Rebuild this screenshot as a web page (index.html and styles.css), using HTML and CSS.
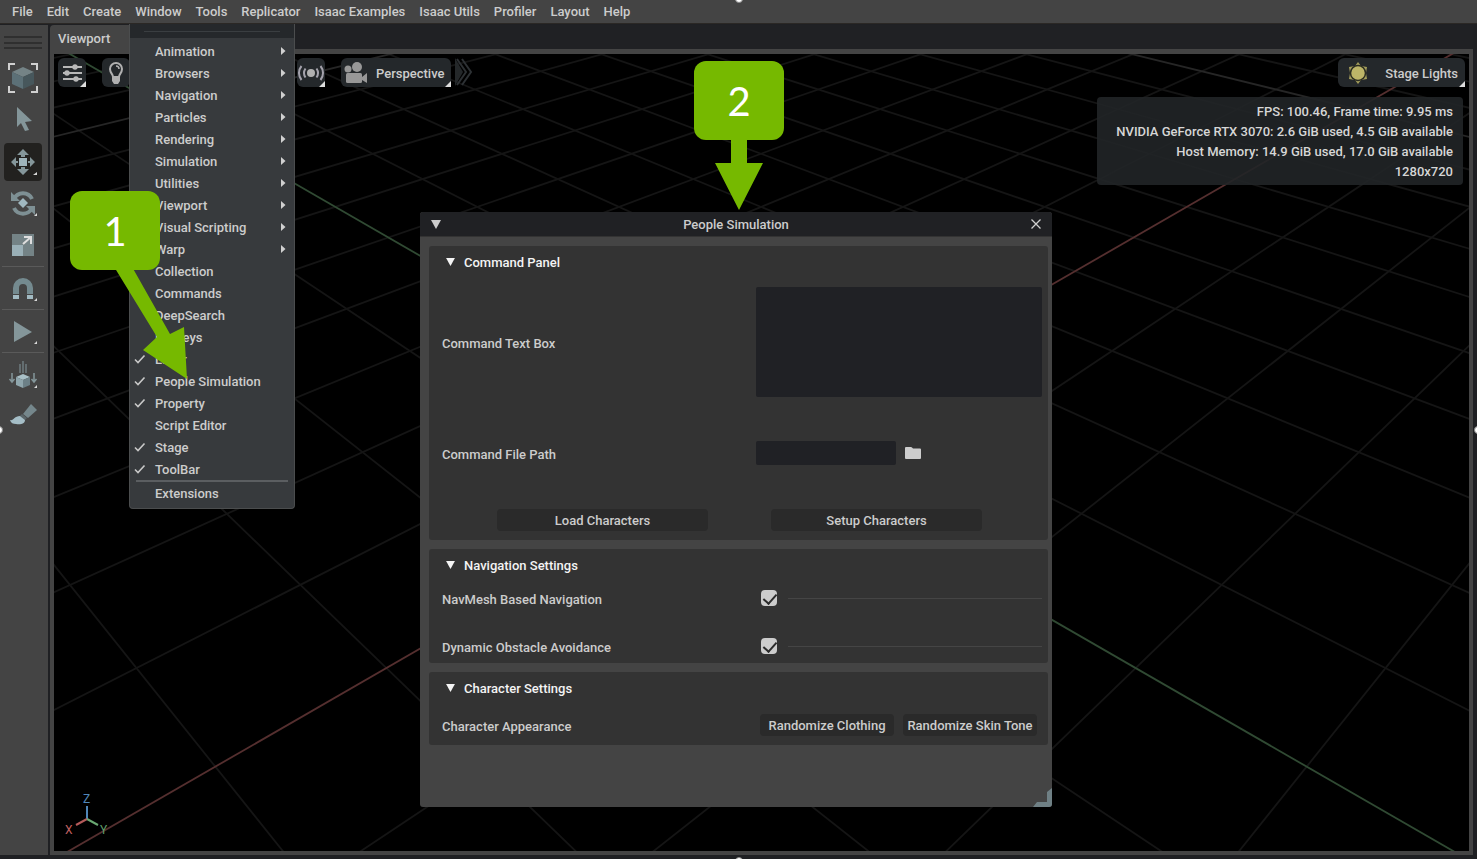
FILE: index.html
```
<!DOCTYPE html>
<html lang="en">
<head>
    <meta charset="utf-8">
    <title>People Simulation</title>
    <link rel="stylesheet" href="styles.css">
</head>
<body>
    <!-- shared shapes -->
    <svg class="defs" width="0" height="0">
        <symbol id="tick" viewBox="0 0 12 10"><path d="M1 5.500 L4 8.500 L10.500 1.500" fill="none" stroke="#c8c8c8" stroke-width="1.600"/></symbol>
        <symbol id="arrow" viewBox="0 0 6 8"><path d="M1 0 L5.500 4 L1 8 Z" fill="#d0d0d0"/></symbol>
        <symbol id="down" viewBox="0 0 10 9"><path d="M0 0 H10 L5 9 Z" fill="currentColor"/></symbol>
    </svg>

    <nav class="menubar">
        <button>File</button>
        <button>Edit</button>
        <button>Create</button>
        <button>Window</button>
        <button>Tools</button>
        <button>Replicator</button>
        <button>Isaac Examples</button>
        <button>Isaac Utils</button>
        <button>Profiler</button>
        <button>Layout</button>
        <button>Help</button>
    </nav>

    <div class="workspace">
        <aside class="toolbar">
            <div class="grip"></div>
            <button class="tool" aria-label="Select mode">
                <svg viewBox="0 0 38 38">
                    <path d="M5 11V5h6M27 5h6v6M33 27v6h-6M11 33H5v-6" fill="none" stroke="#d0d0d0" stroke-width="2"/>
                    <path d="M19 8l11 5-11 5-11-5z" fill="#748386"/>
                    <path d="M8 13l11 5v12L8 25z" fill="#5c7077"/>
                    <path d="M30 13l-11 5v12l11-5z" fill="#47575c"/>
                </svg>
            </button>
            <button class="tool" aria-label="Select">
                <svg viewBox="0 0 38 38"><path d="M13 6l15 14-7 1 4 8-4 1-4-8-4 4z" fill="#84969a"/></svg>
            </button>
            <button class="tool active" aria-label="Move">
                <svg viewBox="0 0 38 38">
                    <path d="M15 15h8v8h-8z" fill="#9eb4bb"/>
                    <path d="M19 6l6 6h-4v2h-4v-2h-4zM19 32l6-6h-4v-2h-4v2h-4zM7 19l5-5v4h2v2h-2v4zM31 19l-5-5v4h-2v2h2v4z" fill="#84969a"/>
                    <path d="M33 29v3h-4z" fill="#d8d8d8"/>
                </svg>
            </button>
            <button class="tool" aria-label="Rotate">
                <svg viewBox="0 0 38 38">
                    <path d="M19 13l5 5-5 5-5-5z" fill="#a0b8c0"/>
                    <path d="M10 14a10 10 0 0 1 18 0M28 23a10 10 0 0 1-18 0" fill="none" stroke="#7e9094" stroke-width="4"/>
                    <path d="M7 7v9h9zM31 30v-9h-9z" fill="#7e9094"/>
                    <path d="M33 28v3h-3z" fill="#d8d8d8"/>
                </svg>
            </button>
            <button class="tool" aria-label="Scale">
                <svg viewBox="0 0 38 38">
                    <path d="M8 7h22v22H8z" fill="#748386"/>
                    <path d="M8 18h11v11H8z" fill="#9ab0b7"/>
                    <path d="M19 17l8-7M20 10h7v7" fill="none" stroke="#dedede" stroke-width="2"/>
                </svg>
            </button>
            <hr>
            <button class="tool" aria-label="Snap">
                <svg viewBox="0 0 38 38">
                    <path d="M12 24v-6a7 7 0 0 1 14 0v6" fill="none" stroke="#748a8f" stroke-width="6"/>
                    <path d="M9 25h6v4H9zM23 25h6v4h-6z" fill="#a2bac2"/>
                    <path d="M33 28v3h-3z" fill="#d8d8d8"/>
                </svg>
            </button>
            <hr>
            <button class="tool" aria-label="Play">
                <svg viewBox="0 0 38 38"><path d="M10 8l18 11-18 10z" fill="#84969a"/><path d="M33 28v3h-3z" fill="#d8d8d8"/></svg>
            </button>
            <hr>
            <button class="tool" aria-label="Drop objects">
                <svg viewBox="0 0 38 38">
                    <path d="M16 8v9M19 5v12M22 8v9" stroke="#6d7b7f" stroke-width="1.500"/>
                    <path d="M8 17v9M5.500 23l2.500 3 2.500-3M30 17v9M27.500 23l2.500 3 2.500-3" fill="none" stroke="#84969a" stroke-width="1.500"/>
                    <path d="M19 18l7 3-7 3-7-3z" fill="#a9c0c7"/>
                    <path d="M12 21l7 3v8l-7-3z" fill="#8fa6ad"/>
                    <path d="M26 21l-7 3v8l7-3z" fill="#6c8087"/>
                    <path d="M33 29v3h-3z" fill="#d8d8d8"/>
                </svg>
            </button>
            <button class="tool" aria-label="Paint">
                <svg viewBox="0 0 38 38">
                    <path d="M27 6l6 6-9 8-5-4z" fill="#75878c"/>
                    <path d="M18 16l5 4-2 2-5-4z" fill="#5a666a"/>
                    <path d="M16 18l5 4c0 4-5 5-9 4-3 0-5-1-6-4 4 1 4-4 10-4z" fill="#a5bec7"/>
                </svg>
            </button>
        </aside>

        <main class="viewport">
            <div class="tabs">
                <div class="tab">Viewport</div>
            </div>
            <div class="scene">
                <!-- floor grid: every line of a family starts at its vanishing point -->
                <svg class="floor" viewBox="54 54 1415 797" preserveAspectRatio="none">
                    <defs>
                        <path id="grid" d="M-718-400l1600 2000M-718-400l2068 2000M-718-400l2536 2000M-718-400l3004 2000M-718-400l3939 2000M-718-400l4406 2000M-718-400l4874 2000M-718-400l5342 2000M-718-400l5809 2000M-718-400l6277 2000M-718-400l6744 2000M-718-400l7212 2000M-718-400l7680 2000M-718-400l8615 2000M-718-400l9082 2000M-718-400l9550 2000"/>
                        <path id="major" d="M-718-400l8147 2000"/>
                        <path id="axis" d="M-718-400l3471 2000"/>
                    </defs>
                    <g fill="none" stroke-width="1.800">
                        <g stroke="#151515">
                            <use href="#grid"/>
                            <use href="#grid" transform="translate(1522 0) scale(-1 1)"/>
                        </g>
                        <g stroke="#262626">
                            <use href="#major"/>
                            <use href="#major" transform="translate(1522 0) scale(-1 1)"/>
                        </g>
                        <use href="#axis" stroke="#304a33"/>
                        <use href="#axis" stroke="#552f2f" transform="translate(1522 0) scale(-1 1)"/>
                    </g>
                </svg>

                <div class="viewbar">
                    <button class="chip square" aria-label="Viewport settings">
                        <svg viewBox="0 0 28 28">
                            <path d="M5 8h19M5 14h19M5 20h19" stroke="#b8b8b8" stroke-width="2"/>
                            <g fill="#b8b8b8"><circle cx="17" cy="8" r="2.700"/><circle cx="9" cy="14" r="2.700"/><circle cx="18" cy="20" r="2.700"/></g>
                        </svg>
                    </button>
                    <button class="chip square" aria-label="Lighting">
                        <svg viewBox="0 0 28 28">
                            <path d="M11 18c0-3-3-4-3-8a6 6 0 0 1 12 0c0 4-3 5-3 8z" fill="none" stroke="#b0b0b0" stroke-width="2"/>
                            <path d="M14 7a3 3 0 0 1 3 3" fill="none" stroke="#b0b0b0" stroke-width="1.500"/>
                            <path d="M10 18h8v4l-2 3h-4l-2-3z" fill="#b0b0b0"/>
                        </svg>
                    </button>
                    <button class="chip square live" aria-label="Live sensors">
                        <svg viewBox="0 0 28 28">
                            <circle cx="14" cy="14" r="4" fill="#b0b0b0"/>
                            <path d="M8.500 9.500a8 8 0 0 0 0 9M19.500 9.500a8 8 0 0 1 0 9M4.500 7a11 11 0 0 0 0 14M23.500 7a11 11 0 0 1 0 14" fill="none" stroke="#a4a2ac" stroke-width="2"/>
                        </svg>
                    </button>
                    <button class="chip camera">
                        <svg width="28" height="28" viewBox="0 0 28 28" fill="#989898">
                            <circle cx="6" cy="10" r="3.500"/><circle cx="15" cy="8" r="5"/>
                            <rect x="4" y="14" width="16" height="10" rx="1.500"/><path d="M20 18l5-4v10l-5-3z"/>
                        </svg>
                        <span>Perspective</span>
                    </button>
                    <svg class="chevron" width="19" height="28" viewBox="0 0 19 28">
                        <path d="M0 0l8 14-8 14z" fill="#24282a"/>
                        <path d="M7 1l9 13-9 13M2 1l9 13-9 13" fill="none" stroke="#2d3134" stroke-width="2"/>
                    </svg>
                    <button class="chip lights">
                        <svg width="22" height="22" viewBox="0 0 22 22">
                            <path d="M11 0l3 4 6 1-1 6 1 6-6 1-3 4-3-4-6-1 1-6-1-6 6-1z" fill="#a39d5b"/>
                            <circle cx="11" cy="11" r="7.500" fill="#bdb568" stroke="#2b2c22" stroke-width="1.500"/>
                        </svg>
                        <span>Stage Lights</span>
                    </button>
                </div>

                <div class="stats">
                    <div>FPS: 100.46, Frame time: 9.95 ms</div>
                    <div>NVIDIA GeForce RTX 3070: 2.6 GiB used, 4.5 GiB available</div>
                    <div>Host Memory: 14.9 GiB used, 17.0 GiB available</div>
                    <div>1280x720</div>
                </div>

                <svg class="axes" width="46" height="46" viewBox="0 0 46 46">
                    <path d="M23 26V13" stroke="#4f86b8" stroke-width="2"/>
                    <path d="M23 26l-11 6" stroke="#b55a5a" stroke-width="2"/>
                    <path d="M23 26l11 6" stroke="#6aa872" stroke-width="2"/>
                    <text x="19" y="10" fill="#4f86b8">Z</text>
                    <text x="1" y="41" fill="#c06060">X</text>
                    <text x="36" y="41" fill="#5f9c68">Y</text>
                </svg>
            </div>
        </main>
    </div>

    <section class="dialog">
        <header class="dialog-bar">
            <svg width="10" height="9"><use href="#down"/></svg>
            <h1>People Simulation</h1>
            <button class="close" aria-label="Close">
                <svg width="10" height="10" viewBox="0 0 10 10"><path d="M0.500 0.500l9 9M9.500 0.500l-9 9" stroke="#d0d0d0" stroke-width="1.300"/></svg>
            </button>
        </header>
        <div class="dialog-body">
            <section class="panel">
                <h2><svg width="9" height="8"><use href="#down"/></svg>Command Panel</h2>
                <div class="row">
                    <label for="command_text">Command Text Box</label>
                    <textarea id="command_text"></textarea>
                </div>
                <div class="row file-row">
                    <label for="command_file">Command File Path</label>
                    <div class="file">
                        <input type="text" id="command_file">
                        <button class="browse" aria-label="Browse">
                            <svg width="16" height="12" viewBox="0 0 16 12"><path d="M0 1q0-1 1-1h5q1 0 2 1.500h7q1 0 1 1V11q0 1-1 1H1q-1 0-1-1z" fill="#cdcdcd"/></svg>
                        </button>
                    </div>
                </div>
                <div class="actions">
                    <button class="btn">Load Characters</button>
                    <button class="btn">Setup Characters</button>
                </div>
            </section>

            <section class="panel">
                <h2><svg width="9" height="8"><use href="#down"/></svg>Navigation Settings</h2>
                <div class="row">
                    <label for="navmesh">NavMesh Based Navigation</label>
                    <div class="check"><input type="checkbox" id="navmesh" checked><span class="rule"></span></div>
                </div>
                <div class="row check-row">
                    <label for="avoidance">Dynamic Obstacle Avoidance</label>
                    <div class="check"><input type="checkbox" id="avoidance" checked><span class="rule"></span></div>
                </div>
            </section>

            <section class="panel">
                <h2><svg width="9" height="8"><use href="#down"/></svg>Character Settings</h2>
                <div class="row">
                    <span class="label">Character Appearance</span>
                    <div class="random">
                        <button class="btn">Randomize Clothing</button>
                        <button class="btn">Randomize Skin Tone</button>
                    </div>
                </div>
            </section>
        </div>
        <svg class="resize" width="19" height="19" viewBox="0 0 19 19"><path d="M19 0v19H0l4-5h10V4z" fill="#6f8085"/></svg>
    </section>

    <div class="window-menu">
        <div class="tear"></div>
        <button class="item sub">Animation<svg><use href="#arrow"/></svg></button>
        <button class="item sub">Browsers<svg><use href="#arrow"/></svg></button>
        <button class="item sub">Navigation<svg><use href="#arrow"/></svg></button>
        <button class="item sub">Particles<svg><use href="#arrow"/></svg></button>
        <button class="item sub">Rendering<svg><use href="#arrow"/></svg></button>
        <button class="item sub">Simulation<svg><use href="#arrow"/></svg></button>
        <button class="item sub">Utilities<svg><use href="#arrow"/></svg></button>
        <button class="item sub">Viewport<svg><use href="#arrow"/></svg></button>
        <button class="item sub">Visual Scripting<svg><use href="#arrow"/></svg></button>
        <button class="item sub">Warp<svg><use href="#arrow"/></svg></button>
        <button class="item">Collection</button>
        <button class="item">Commands</button>
        <button class="item">DeepSearch</button>
        <button class="item">Hotkeys</button>
        <button class="item on"><svg><use href="#tick"/></svg>Layer</button>
        <button class="item on"><svg><use href="#tick"/></svg>People Simulation</button>
        <button class="item on"><svg><use href="#tick"/></svg>Property</button>
        <button class="item">Script Editor</button>
        <button class="item on"><svg><use href="#tick"/></svg>Stage</button>
        <button class="item on"><svg><use href="#tick"/></svg>ToolBar</button>
        <hr>
        <button class="item">Extensions</button>
    </div>

    <div class="callout one">
        <svg width="120" height="190" viewBox="0 0 120 190"><path d="M43 74L87 146 73 159 117 188 114 136 100 143 61 74z" fill="#76b900"/></svg>
        <span>1</span>
    </div>
    <div class="callout two">
        <svg width="90" height="150" viewBox="0 0 90 150"><path d="M37 75V102H21L45 149 69 102H53V75z" fill="#76b900"/></svg>
        <span>2</span>
    </div>

    <i class="dot top"></i>
    <i class="dot right"></i>
    <i class="dot bottom"></i>
    <i class="dot left"></i>
</body>
</html>
```
FILE: styles.css
```
* {
    box-sizing: border-box;
}

body {
    display: flex;
    flex-direction: column;
    height: 100vh;
    margin: 0;
    overflow: hidden;
    position: relative;
    background-color: #1f2023;
    color: #cccccc;
    font-family: Roboto, Arial, sans-serif;
    font-size: 13px;
    font-weight: 500;
    line-height: 16px;
}

button {
    margin: 0;
    padding: 0;
    border: none;
    background: none;
    color: inherit;
    font: inherit;
    cursor: pointer;
}

svg {
    display: block;
    flex: none;
}

.defs {
    position: absolute;
}

/* menu bar */
.menubar {
    display: flex;
    gap: 14px;
    height: 24px;
    padding: 1px 12px 0;
    background-color: #444444;
    border-bottom: 1px solid #2b2825;
}

.workspace {
    display: flex;
    flex: 1;
    min-height: 0;
    padding: 1px 4px 4px 0;
    gap: 2px;
}

/* left tools */
.toolbar {
    display: flex;
    flex-direction: column;
    align-items: center;
    gap: 4px;
    width: 48px;
    padding: 11px 2px 0 0;
    background-color: #444444;
}

.grip {
    width: 38px;
    height: 13px;
    margin-bottom: 6px;
    border-top: 2px solid #2f2f2f;
    border-bottom: 2px solid #2f2f2f;
    background: linear-gradient(#2f2f2f, #2f2f2f) center / 100% 2px no-repeat;
}

.tool {
    width: 38px;
    height: 38px;
    border-radius: 4px;
}

.tool.active {
    background-color: #22211f;
}

.toolbar hr {
    width: 42px;
    height: 1px;
    margin: -3px 0 -1px;
    border: none;
    background-color: #5a5a5a;
}

/* viewport */
.viewport {
    display: flex;
    flex-direction: column;
    flex: 1;
    min-width: 0;
}

.tabs {
    display: flex;
    height: 24px;
    background-color: #202124;
}

.tab {
    width: 100px;
    padding: 6px 8px;
    border-radius: 4px 4px 0 0;
    background-color: #444444;
}

.scene {
    position: relative;
    flex: 1;
    min-height: 0;
    border: 4px solid #444444;
    border-top-width: 5px;
    background-color: #000000;
}

.floor {
    position: absolute;
    inset: 0;
    width: 100%;
    height: 100%;
}

.viewbar {
    position: relative;
    display: flex;
    gap: 16px;
    padding: 4px 4px 0;
}

.chip {
    position: relative;
    display: flex;
    align-items: center;
    height: 29px;
    border-radius: 6px;
    background-color: #24282b;
}

.chip span {
    padding-top: 2px;
}

.chip.square {
    width: 28px;
}

.chip.square svg {
    width: 28px;
    height: 28px;
}

.chip.square:not(:nth-child(2))::after,
.camera::after,
.lights::after {
    content: "";
    position: absolute;
    right: 0;
    bottom: 0;
    border: 3px solid;
    border-color: transparent #dddddd #dddddd transparent;
}

.live {
    margin-left: 151px;
}

.camera {
    gap: 6px;
    padding: 0 6px 0 1px;
}

.chevron {
    margin-left: -12px;
}

.lights {
    gap: 16px;
    margin-left: auto;
    padding: 0 7px 0 9px;
}

.stats {
    position: absolute;
    top: 43px;
    right: 6px;
    min-width: 366px;
    padding: 5px 10px 3px;
    border-radius: 4px;
    background-color: rgba(33, 37, 39, 0.9);
    color: #d6d6d6;
    line-height: 20px;
    text-align: right;
}

.axes {
    position: absolute;
    left: 10px;
    bottom: 12px;
    font-size: 12px;
    font-weight: 400;
}

/* people simulation window */
.dialog {
    position: absolute;
    top: 212px;
    left: 420px;
    width: 632px;
    height: 595px;
    border-radius: 3px;
    background-color: #444444;
    overflow: hidden;
}

.dialog-bar {
    display: flex;
    align-items: center;
    height: 25px;
    padding: 0 11px;
    background-color: #202124;
    border-bottom: 1px solid #333333;
}

.dialog-bar h1 {
    flex: 1;
    margin: 0;
    padding-top: 2px;
    font-size: 13px;
    font-weight: 500;
    text-align: center;
}

.dialog-body {
    display: flex;
    flex-direction: column;
    gap: 9px;
    padding: 9px 4px 0 9px;
}

.panel {
    padding: 9px 6px 9px 13px;
    border-radius: 3px;
    background-color: #333333;
}

.panel h2 {
    display: flex;
    align-items: center;
    gap: 9px;
    margin: 0 0 16px;
    padding-left: 4px;
    color: #f4f4f4;
    font-size: 13px;
    font-weight: 500;
}

.panel h2 svg {
    margin-bottom: 2px;
}

.row {
    display: grid;
    grid-template-columns: 314px 1fr;
    align-items: center;
}

.row label,
.row .label {
    padding-top: 2px;
    margin-bottom: -2px;
}

.file-row {
    margin: 44px 0;
}

.check-row {
    margin-top: 32px;
}

textarea,
input[type="text"] {
    display: block;
    border: none;
    border-radius: 2px;
    background-color: #202125;
    color: inherit;
    font: inherit;
    resize: none;
}

textarea {
    width: 100%;
    height: 110px;
}

.file {
    display: flex;
    align-items: center;
    gap: 9px;
}

.file input {
    width: 140px;
    height: 24px;
}

.actions {
    display: flex;
    justify-content: space-between;
    padding: 0 60px 0 55px;
}

.btn {
    height: 22px;
    padding-top: 2px;
    border-radius: 4px;
    background-color: #2a2a2a;
}

.actions .btn {
    width: 211px;
}

.random {
    display: flex;
    gap: 9px;
    padding: 1px 0 0 4px;
}

.random .btn {
    width: 134px;
    white-space: nowrap;
}

.check {
    display: flex;
    align-items: center;
    gap: 11px;
    padding-left: 5px;
}

.check input {
    appearance: none;
    position: relative;
    width: 16px;
    height: 16px;
    margin: 0;
    border-radius: 4px;
    background-color: #cccccc;
}

.check input:checked::after {
    content: "";
    position: absolute;
    left: 5px;
    top: 1px;
    width: 6px;
    height: 11px;
    border: solid #2b2b2b;
    border-width: 0 2px 2px 0;
    transform: rotate(42deg);
}

.rule {
    flex: 1;
    height: 1px;
    background-color: #454545;
}

.resize {
    position: absolute;
    right: 0;
    bottom: 0;
}

/* window menu */
.window-menu {
    position: absolute;
    top: 24px;
    left: 129px;
    width: 166px;
    padding-bottom: 4px;
    border: 1px solid #4b4d4e;
    border-top: none;
    border-radius: 0 0 4px 4px;
    background-color: #373a3d;
}

.tear {
    height: 14px;
    margin-bottom: 2px;
    padding: 7px 14px 0;
    background-color: #25282b;
}

.tear::before {
    content: "";
    display: block;
    height: 1px;
    background-color: #3a3e41;
}

.item {
    display: flex;
    align-items: center;
    width: 100%;
    height: 22px;
    padding: 2px 8px 0 25px;
}

.item svg {
    width: 6px;
    height: 8px;
    margin-bottom: 2px;
}

.item.sub {
    justify-content: space-between;
}

.item.on {
    gap: 9px;
    padding-left: 4px;
}

.item.on svg {
    width: 12px;
    height: 10px;
    margin-bottom: 3px;
}

.window-menu hr {
    height: 2px;
    margin: 0 6px;
    border: none;
    background-color: #5b5e61;
}

/* numbered callouts */
.callout {
    position: absolute;
    width: 90px;
    height: 79px;
    border-radius: 12px;
    background-color: #76b900;
    color: #ffffff;
    font-family: Lato, sans-serif;
    font-size: 40px;
    font-weight: 400;
    line-height: 81px;
    text-align: center;
}

.callout svg {
    position: absolute;
    top: 0;
    left: 0;
}

.callout span {
    position: relative;
}

.one {
    top: 191px;
    left: 70px;
}

.two {
    top: 61px;
    left: 694px;
}

.dot {
    position: absolute;
    width: 8px;
    height: 8px;
    border: 1px solid #888888;
    border-radius: 50%;
    background-color: #ffffff;
}

.dot.top {
    top: -5px;
    left: 50%;
    margin-left: -4px;
}

.dot.right {
    top: 50%;
    right: -5px;
    margin-top: -4px;
}

.dot.bottom {
    bottom: -6px;
    left: 50%;
    margin-left: -4px;
}

.dot.left {
    top: 50%;
    left: -5px;
    margin-top: -4px;
}
```
